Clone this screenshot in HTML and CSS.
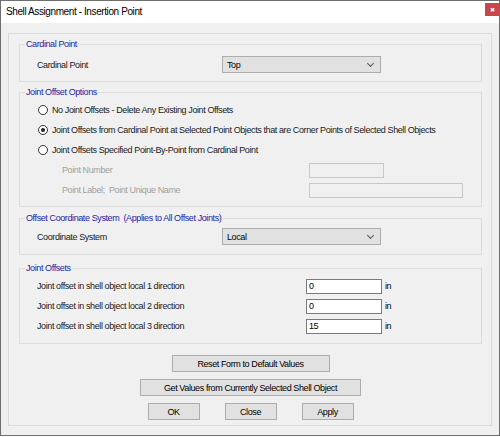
FILE: index.html
```html
<!DOCTYPE html>
<html lang="en">
<head>
<meta charset="UTF-8" />
<title>Shell Assignment - Insertion Point</title>
<link rel="stylesheet" href="styles.css">
</head>
<body>

<div class="window">
  <div class="titlebar">
    <span class="title">Shell Assignment - Insertion Point</span>
    <span class="close">&#x2716;</span>
  </div>

  <div class="client">
    <div class="panel">

      <div class="group g-cardinal">
        <span class="legend">Cardinal Point</span>
        <div class="row">
          <span class="label">Cardinal Point</span>
          <div class="combo"><span>Top</span><span class="chev"></span></div>
        </div>
      </div>

      <div class="group g-options">
        <span class="legend">Joint Offset Options</span>
        <div class="radio"><span class="dot"></span>No Joint Offsets - Delete Any Existing Joint Offsets</div>
        <div class="radio"><span class="dot on"></span>Joint Offsets from Cardinal Point at Selected Point Objects that are Corner Points of Selected Shell Objects</div>
        <div class="radio"><span class="dot"></span>Joint Offsets Specified Point-By-Point from Cardinal Point</div>
        <div class="sub">
          <span class="label dim">Point Number</span>
          <span class="box short"></span>
        </div>
        <div class="sub">
          <span class="label dim">Point Label;&nbsp; Point Unique Name</span>
          <span class="box long"></span>
        </div>
      </div>

      <div class="group g-coord">
        <span class="legend">Offset Coordinate System&nbsp; (Applies to All Offset Joints)</span>
        <div class="row">
          <span class="label">Coordinate System</span>
          <div class="combo"><span>Local</span><span class="chev"></span></div>
        </div>
      </div>

      <div class="group g-offsets">
        <span class="legend">Joint Offsets</span>
        <div class="offset">
          <span class="label wide">Joint offset in shell object local 1 direction</span>
          <span class="field">0</span><span class="unit">in</span>
        </div>
        <div class="offset">
          <span class="label wide">Joint offset in shell object local 2 direction</span>
          <span class="field">0</span><span class="unit">in</span>
        </div>
        <div class="offset">
          <span class="label wide">Joint offset in shell object local 3 direction</span>
          <span class="field">15</span><span class="unit">in</span>
        </div>
      </div>

      <div class="actions">
        <button class="btn reset">Reset Form to Default Values</button>
        <button class="btn getvals">Get Values from Currently Selected Shell Object</button>
        <div class="btnrow">
          <button class="btn small">OK</button>
          <button class="btn small">Close</button>
          <button class="btn small">Apply</button>
        </div>
      </div>

    </div>
  </div>
</div>

</body>
</html>
```

FILE: styles.css
```css
body {
  margin: 0;
  background: #ffffff;
  font-family: "Liberation Sans", Arial, sans-serif;
  font-size: 9px;
  letter-spacing: -0.4px;
  color: #1a1a1a;
}
.window {
  width: 500px;
  height: 436px;
  box-sizing: border-box;
  border: 1px solid #6e6e6e;
  background: #f0f0f0;
  display: flex;
  flex-direction: column;
}
.titlebar {
  height: 22px;
  background: #ffffff;
  display: flex;
  align-items: center;
  justify-content: space-between;
  padding-left: 5px;
}
.title {
  font-size: 10px;
  color: #000;
  margin-top: -2px;
}
.close {
  width: 14px;
  height: 13px;
  margin-top: -5px;
  background: #c9464b;
  color: #fff;
  font-size: 6px;
  display: flex;
  align-items: center;
  justify-content: center;
}
.client {
  flex: 1;
  padding: 10px 7px 8px 7px;
}
.panel {
  height: 393px;
  box-sizing: border-box;
  border: 1px solid #dadada;
  padding: 10px 9px 0 10px;
}
.group {
  position: relative;
  border: 1px solid #dcdcdc;
  box-sizing: border-box;
  padding-left: 17px;
}
.legend {
  position: absolute;
  top: -7px;
  left: 5px;
  padding: 0 1px;
  background: #f0f0f0;
  color: #23239e;
  line-height: 12px;
}
.g-cardinal {
  height: 38px;
  padding-top: 11px;
}
.g-options {
  height: 115px;
  margin-top: 10px;
  padding-top: 7px;
}
.g-coord {
  height: 37px;
  margin-top: 11px;
  padding-top: 9px;
}
.g-offsets {
  height: 76px;
  margin-top: 13px;
  padding-top: 7px;
}
.row {
  display: flex;
  align-items: center;
  height: 17px;
}
.label {
  width: 185px;
  flex-shrink: 0;
}
.label.dim {
  color: #a0a0a0;
  width: 247px;
}
.label.wide {
  width: 269px;
}
.combo {
  width: 159px;
  height: 17px;
  box-sizing: border-box;
  border: 1px solid #adadad;
  background: #e1e1e1;
  display: flex;
  align-items: center;
  justify-content: space-between;
  padding: 0 7px 0 4px;
  color: #000;
}
.chev {
  width: 4px;
  height: 4px;
  border-right: 1px solid #555;
  border-bottom: 1px solid #555;
  transform: rotate(45deg);
  margin-top: -3px;
}
.radio {
  display: flex;
  align-items: center;
  height: 20px;
}
.dot {
  width: 10px;
  height: 10px;
  box-sizing: border-box;
  border: 1px solid #333;
  border-radius: 50%;
  background: #fff;
  margin: 0 4px 0 1px;
  display: flex;
  align-items: center;
  justify-content: center;
}
.dot.on::after {
  content: "";
  width: 4px;
  height: 4px;
  border-radius: 50%;
  background: #222;
}
.sub {
  display: flex;
  align-items: center;
  height: 20px;
  padding-left: 25px;
}
.box {
  height: 15px;
  box-sizing: border-box;
  border: 1px solid #c8c8c8;
  background: #f0f0f0;
}
.box.short {
  width: 75px;
}
.box.long {
  width: 154px;
}
.offset {
  display: flex;
  align-items: center;
  height: 20px;
}
.field {
  width: 76px;
  height: 15px;
  box-sizing: border-box;
  border: 1px solid #7a7a7a;
  background: #fff;
  color: #000;
  padding-left: 2px;
  line-height: 13px;
}
.unit {
  margin-left: 3px;
  color: #000;
}
.actions {
  display: flex;
  flex-direction: column;
  align-items: center;
  padding-top: 11px;
}
.btn {
  font-family: inherit;
  font-size: 9px;
  letter-spacing: -0.4px;
  color: #000;
  background: #e1e1e1;
  border: 1px solid #adadad;
  height: 17px;
  padding: 0;
  box-sizing: border-box;
}
.reset {
  width: 158px;
}
.getvals {
  width: 221px;
  margin-top: 7px;
}
.btnrow {
  display: flex;
  gap: 25px;
  margin-top: 7px;
}
.btn.small {
  width: 52px;
}
```
